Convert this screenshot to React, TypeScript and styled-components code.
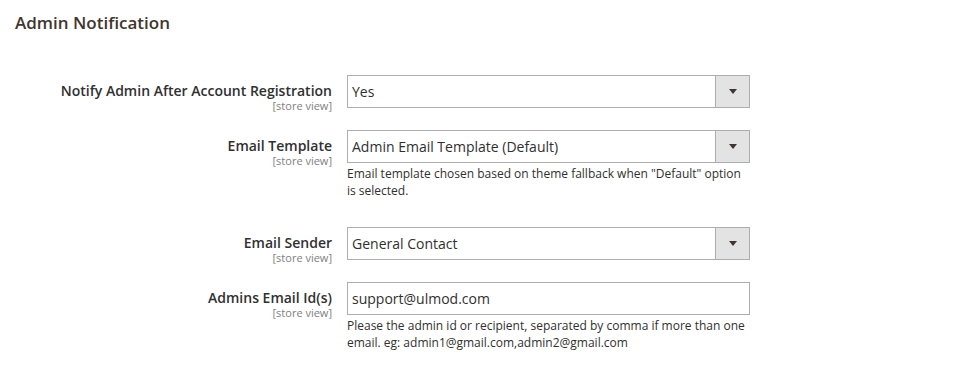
import React from "react";
import styled, { createGlobalStyle } from "styled-components";

const GlobalStyle = createGlobalStyle`
  body {
    margin: 0;
    background: #ffffff;
    font-family: "Open Sans", "Liberation Sans", sans-serif;
    color: #303030;
  }
`;

const Page = styled.div`
  padding: 13px 15px 0 15px;
  width: 974px;
  box-sizing: border-box;
`;

const Title = styled.h2`
  margin: 0 0 42px 0;
  font-size: 17px;
  line-height: 20px;
  font-weight: 600;
  color: #41362f;
`;

const Row = styled.div`
  display: flex;
  align-items: flex-start;
  gap: 15px;
  margin-bottom: 18px;
`;

const LabelCol = styled.div`
  width: 317px;
  flex: none;
  text-align: right;
  padding-top: 7px;
`;

const Label = styled.label`
  display: block;
  font-size: 14px;
  line-height: 17px;
  font-weight: 600;
  color: #303030;
`;

const Scope = styled.span`
  display: block;
  font-size: 11px;
  line-height: 13px;
  color: #808080;
`;

const Control = styled.div`
  width: 403px;
  flex: none;
`;

const Box = styled.div`
  display: flex;
  align-items: stretch;
  height: 33px;
  box-sizing: border-box;
  border: 1px solid #adadad;
  background: #ffffff;
  font-size: 14px;
  color: #303030;
`;

const Value = styled.div`
  flex: 1;
  display: flex;
  align-items: center;
  padding-left: 4px;
  white-space: nowrap;
`;

const Arrow = styled.div`
  width: 33px;
  flex: none;
  display: flex;
  align-items: center;
  justify-content: center;
  background: #e3e3e3;
  border-left: 1px solid #adadad;

  &::after {
    content: "";
    border-left: 4px solid transparent;
    border-right: 4px solid transparent;
    border-top: 5px solid #41362f;
  }
`;

const Note = styled.p`
  margin: 2px 0 10px 0;
  font-size: 12px;
  line-height: 17px;
  color: #303030;
`;

interface FieldProps {
  label: string;
  value: string;
  select?: boolean;
  note?: string;
}

const Field = ({ label, value, select, note }: FieldProps) => (
  <Row>
    <LabelCol>
      <Label>{label}</Label>
      <Scope>[store view]</Scope>
    </LabelCol>
    <Control>
      <Box>
        <Value>{value}</Value>
        {select && <Arrow />}
      </Box>
      {note && <Note>{note}</Note>}
    </Control>
  </Row>
);

export default function App() {
  return (
    <Page>
      <GlobalStyle />
      <Title>Admin Notification</Title>
      <Field label="Notify Admin After Account Registration" value="Yes" select />
      <Field
        label="Email Template"
        value="Admin Email Template (Default)"
        select
        note={'Email template chosen based on theme fallback when "Default" option is selected.'}
      />
      <Field label="Email Sender" value="General Contact" select />
      <Field
        label="Admins Email Id(s)"
        value="support@ulmod.com"
        note="Please the admin id or recipient, separated by comma if more than one email. eg: admin1@gmail.com,admin2@gmail.com"
      />
    </Page>
  );
}
